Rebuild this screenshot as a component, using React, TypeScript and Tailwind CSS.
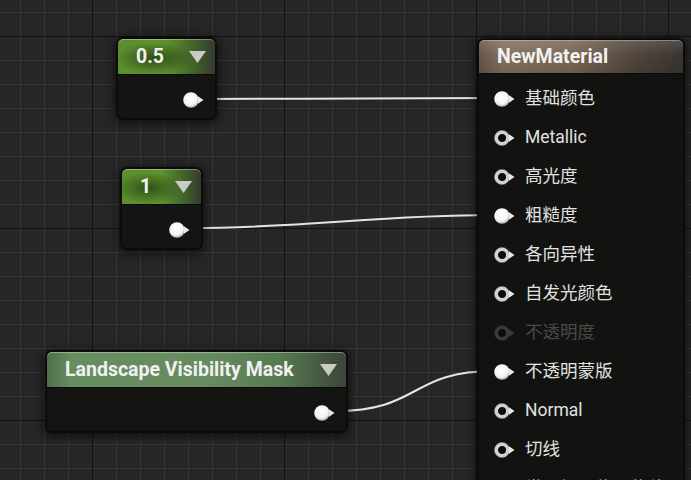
import React from "react"

const font = "font-['Roboto','Noto_Sans_CJK_SC',sans-serif]"

function Pin({ filled, dim }: { filled?: boolean; dim?: boolean }) {
  const ring = dim ? "#3a3a3a" : "#d2d2d2"
  return (
    <svg width="22" height="16" viewBox="0 0 22 16" className="shrink-0 overflow-visible">
      <defs>
        <radialGradient id="pinFill" cx="45%" cy="40%" r="60%">
          <stop offset="0%" stopColor="#ffffff" />
          <stop offset="70%" stopColor="#f4f4f4" />
          <stop offset="100%" stopColor="#b0b0b0" />
        </radialGradient>
      </defs>
      {filled ? (
        <circle cx="8" cy="8" r="7.8" fill="url(#pinFill)" />
      ) : (
        <>
          <circle cx="8" cy="8" r="5.8" fill="#0b0b0b" stroke={ring} strokeWidth="3.6" />
          <circle cx="8" cy="8" r="7.6" fill="none" stroke={dim ? "#2a2a2a" : "#8c8c8c"} strokeWidth="0.5" />
        </>
      )}
      <polygon points="15,4.3 20.5,8 15,11.7" fill={dim ? "#3a3a3a" : "#e8e8e8"} />
    </svg>
  )
}

function Caret() {
  return (
    <svg width="17" height="12" viewBox="0 0 17 12" className="shrink-0">
      <polygon points="0,0 17,0 8.5,12" fill="#c9cbc6" />
    </svg>
  )
}

function ConstNode({
  left,
  top,
  width,
  title,
  headerClass,
}: {
  left: number
  top: number
  width: number
  title: string
  headerClass: string
}) {
  return (
    <div
      className="absolute rounded-[7px] bg-[#0b0c0a] p-[2px] shadow-[0_2px_8px_2px_rgba(0,0,0,0.55)]"
      style={{ left, top, width }}
    >
      <div
        className={`h-[35px] rounded-t-[5px] flex items-center justify-between pl-[18px] pr-[9px] shadow-[inset_0_1px_0_rgba(255,255,255,0.35)] ${headerClass}`}
      >
        <span className="text-[19.5px] font-bold text-[#f1f1f1] leading-none">{title}</span>
        <Caret />
      </div>
      <div className="h-[44px] rounded-b-[5px] bg-[#141512] border-t border-[#0a0a0a] flex items-center justify-end pr-[10px] pt-[6px]">
        <Pin filled />
      </div>
    </div>
  )
}

const rows: { label: string; filled?: boolean; dim?: boolean }[] = [
  { label: "基础颜色", filled: true },
  { label: "Metallic" },
  { label: "高光度" },
  { label: "粗糙度", filled: true },
  { label: "各向异性" },
  { label: "自发光颜色" },
  { label: "不透明度", dim: true },
  { label: "不透明蒙版", filled: true },
  { label: "Normal" },
  { label: "切线" },
  { label: "世界场景位置偏移" },
]

function Grid() {
  return (
    <svg className="absolute inset-0" width="691" height="480">
      <defs>
        <pattern id="minor" x="20" y="12" width="24" height="24" patternUnits="userSpaceOnUse">
          <rect x="0" y="0" width="24" height="1" fill="#353535" />
          <rect x="0" y="0" width="1" height="24" fill="#353535" />
        </pattern>
        <pattern id="major" x="92" y="36" width="192" height="192" patternUnits="userSpaceOnUse">
          <rect x="0" y="0" width="192" height="1" fill="#121212" />
          <rect x="0" y="0" width="1" height="192" fill="#121212" />
        </pattern>
      </defs>
      <rect width="691" height="480" fill="url(#minor)" />
      <rect width="691" height="480" fill="url(#major)" />
    </svg>
  )
}

function Wires() {
  return (
    <svg className="absolute inset-0" width="691" height="480" fill="none">
      <g stroke="#e4e4e4" strokeWidth="2" strokeLinecap="round">
        <path d="M203 99 C 300 99, 400 98, 494 98" />
        <path d="M190 228 C 310 228, 374 215, 494 215" />
        <path d="M336 411 C 420 411, 410 371, 494 371" />
      </g>
    </svg>
  )
}

export default function App() {
  return (
    <div className={`relative w-[691px] h-[480px] overflow-hidden bg-[#262626] ${font}`}>
      <Grid />
      <Wires />

      <ConstNode
        left={116}
        top={37}
        width={101}
        title="0.5"
        headerClass="bg-[radial-gradient(ellipse_40px_16px_at_38%_55%,rgba(28,52,14,0.75),transparent),linear-gradient(90deg,#5c8e2d_0%,#5f922f_50%,#40602a_80%,#33392f_100%)]"
      />
      <ConstNode
        left={120}
        top={167}
        width={83}
        title="1"
        headerClass="bg-[radial-gradient(ellipse_34px_16px_at_34%_55%,rgba(28,52,14,0.7),transparent),linear-gradient(90deg,#5c8e2d_0%,#5f922f_50%,#40602a_80%,#33392f_100%)]"
      />
      <ConstNode
        left={45}
        top={350}
        width={303}
        title="Landscape Visibility Mask"
        headerClass="bg-[linear-gradient(90deg,#4d6f48_0%,#668d60_8%,#668b60_55%,#557a50_78%,#3c4539_100%)]"
      />

      <div className="absolute left-[477px] top-[38px] w-[208px] h-[470px] rounded-[7px] bg-[#0b0c0a] p-[2px] shadow-[0_2px_8px_2px_rgba(0,0,0,0.55)]">
        <div className="h-[33px] rounded-t-[5px] flex items-center pl-[18px] bg-[linear-gradient(180deg,rgba(255,255,255,0.12),transparent_45%,rgba(0,0,0,0.12)),linear-gradient(90deg,#66574a_0%,#85725f_12%,#7b6957_45%,#4f453c_78%,#3a3531_100%)] shadow-[inset_0_1px_0_rgba(255,255,255,0.3)]">
          <span className="text-[19.5px] font-bold text-[#f1f1f1] leading-none">NewMaterial</span>
        </div>
        <div className="h-[435px] bg-[rgba(19,20,18,0.94)] border-t border-[#0a0a0a] pt-[5px]">
          {rows.map((r, i) => (
            <div key={i} className="h-[39px] flex items-center pl-[15px] gap-[9px]">
              <Pin filled={r.filled} dim={r.dim} />
              <span
                className={`text-[17.5px] leading-none whitespace-nowrap ${r.dim ? "text-[#4a4a48]" : "text-[#e2e2e0]"}`}
              >
                {r.label}
              </span>
            </div>
          ))}
        </div>
      </div>
    </div>
  )
}
